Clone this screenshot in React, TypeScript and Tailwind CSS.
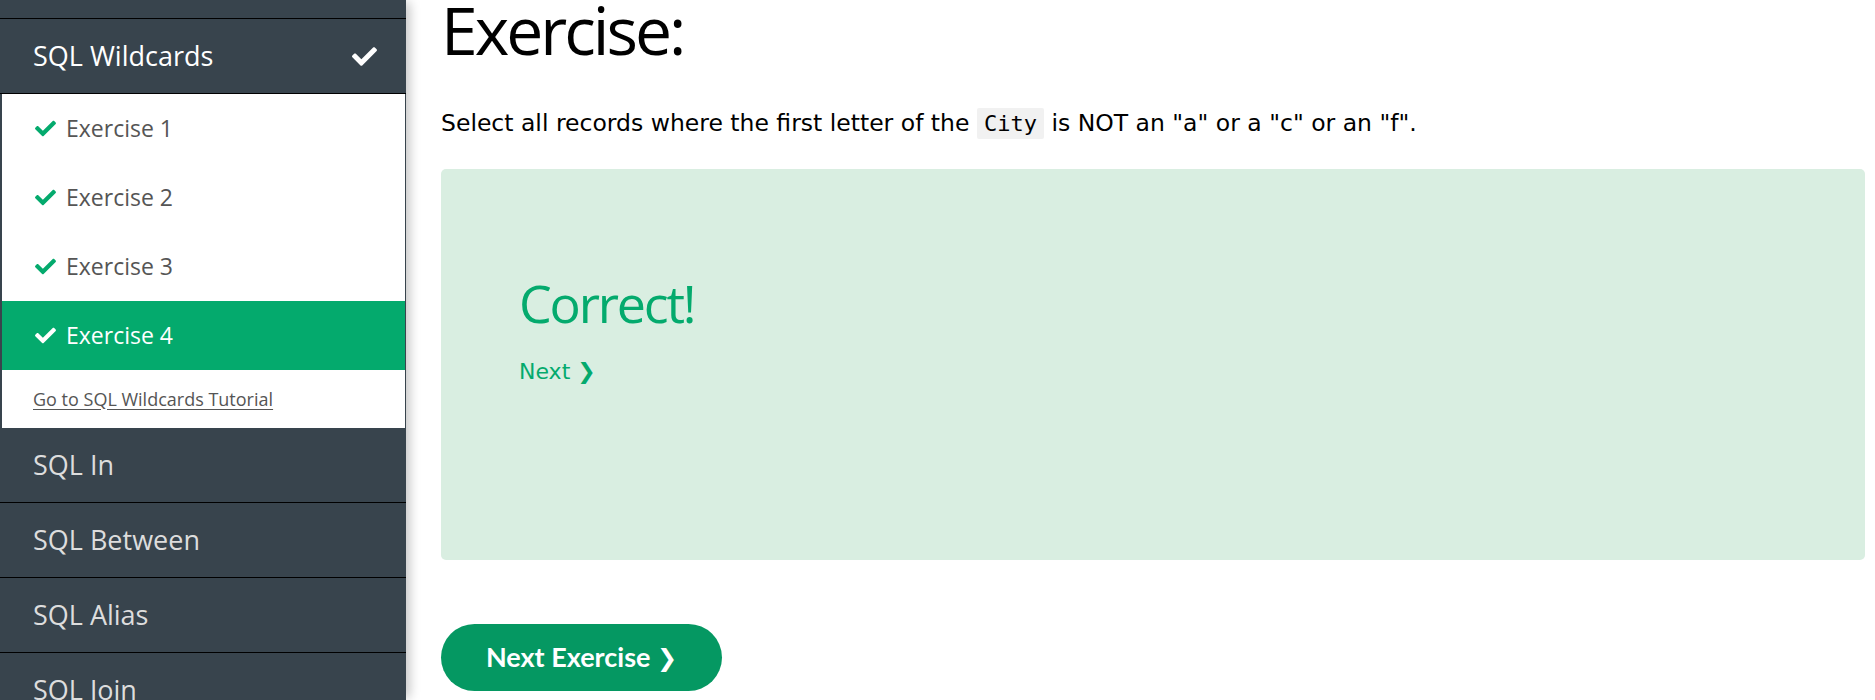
import React from "react";

const Check = ({ className }: { className?: string }) => (
  <svg viewBox="0 0 512 512" className={className} fill="currentColor" aria-hidden="true">
    <path d="M173.898 439.404l-166.4-166.4c-9.997-9.997-9.997-26.206 0-36.204l36.203-36.204c9.997-9.998 26.207-9.998 36.204 0L192 312.69 432.095 72.596c9.997-9.997 26.207-9.997 36.204 0l36.203 36.204c9.997 9.997 9.997 26.206 0 36.204l-294.4 294.401c-9.998 9.997-26.207 9.997-36.204-.001z" />
  </svg>
);

const exercises = ["Exercise 1", "Exercise 2", "Exercise 3", "Exercise 4"];
const topics = ["SQL In", "SQL Between", "SQL Alias", "SQL Join"];

export default function App() {
  return (
    <div className="flex h-[700px] w-full overflow-hidden bg-white">
      <aside className="relative z-10 flex w-[406px] shrink-0 flex-col bg-[#38444d] font-['Open_Sans',sans-serif] shadow-[6px_0_10px_-2px_rgba(0,0,0,0.22)]">
        <div className="h-[19px] shrink-0 border-b border-black" />
        <div className="flex h-[75px] shrink-0 items-center justify-between border-b border-black pl-[33px] pr-[28px] text-[27px] text-white">
          <span>SQL Wildcards</span>
          <Check className="h-[25px] w-[27px] text-white" />
        </div>
        <div className="ml-[2px] mr-[1px] flex shrink-0 flex-col bg-white">
          {exercises.map((e, i) => {
            const active = i === 3;
            return (
              <div
                key={e}
                className={
                  active
                    ? "flex h-[69px] items-center gap-[9px] bg-[#04aa6d] pl-[32px] text-[23px] text-white"
                    : "flex h-[69px] items-center gap-[9px] pl-[32px] text-[23px] text-[#555555]"
                }
              >
                <Check className={active ? "h-[21px] w-[23px] text-white" : "h-[21px] w-[23px] text-[#04aa6d]"} />
                <span>{e}</span>
              </div>
            );
          })}
          <div className="flex h-[58px] items-center pl-[31px]">
            <span className="text-[18px] text-[#555555] underline underline-offset-[3px]">Go to SQL Wildcards Tutorial</span>
          </div>
        </div>
        {topics.map((t) => (
          <div key={t} className="flex h-[75px] shrink-0 items-center border-b border-black pl-[33px] text-[27px] text-[#dddddd]">
            {t}
          </div>
        ))}
      </aside>

      <main className="flex min-w-0 flex-1 flex-col pl-[35px] pr-[10px]">
        <h1 className="mt-[-4px] font-['Open_Sans',sans-serif] text-[66px] leading-[66px] tracking-[-3px] text-black">
          Exercise:
        </h1>
        <p className="mt-[46px] font-['DejaVu_Sans',sans-serif] text-[23.5px] leading-[30px] text-black">
          Select all records where the first letter of the{" "}
          <code className="rounded-[2px] bg-[#f1f1f1] px-[7px] py-[3px] font-['DejaVu_Sans_Mono',monospace] text-[22px]">City</code>{" "}
          is NOT an "a" or a "c" or an "f".
        </p>
        <div className="mt-[30px] flex h-[391px] flex-col rounded-[5px] bg-[#d9eee1] pl-[78px] pt-[108px]">
          <div className="font-['Open_Sans',sans-serif] text-[52px] leading-[52px] tracking-[-2.2px] text-[#04aa6d]">Correct!</div>
          <div className="mt-[28px] font-['DejaVu_Sans',sans-serif] text-[22px] leading-[30px] text-[#04aa6d]">
            Next <span className="text-[22px] font-bold">❯</span>
          </div>
        </div>
        <div className="mt-[64px]">
          <button className="flex h-[67px] w-[281px] items-center justify-center rounded-full bg-[#059862] font-['Lato',sans-serif] text-[27px] font-bold text-white">
            Next Exercise&nbsp;<span className="font-['DejaVu_Sans',sans-serif] text-[24px] font-bold">❯</span>
          </button>
        </div>
      </main>
    </div>
  );
}
